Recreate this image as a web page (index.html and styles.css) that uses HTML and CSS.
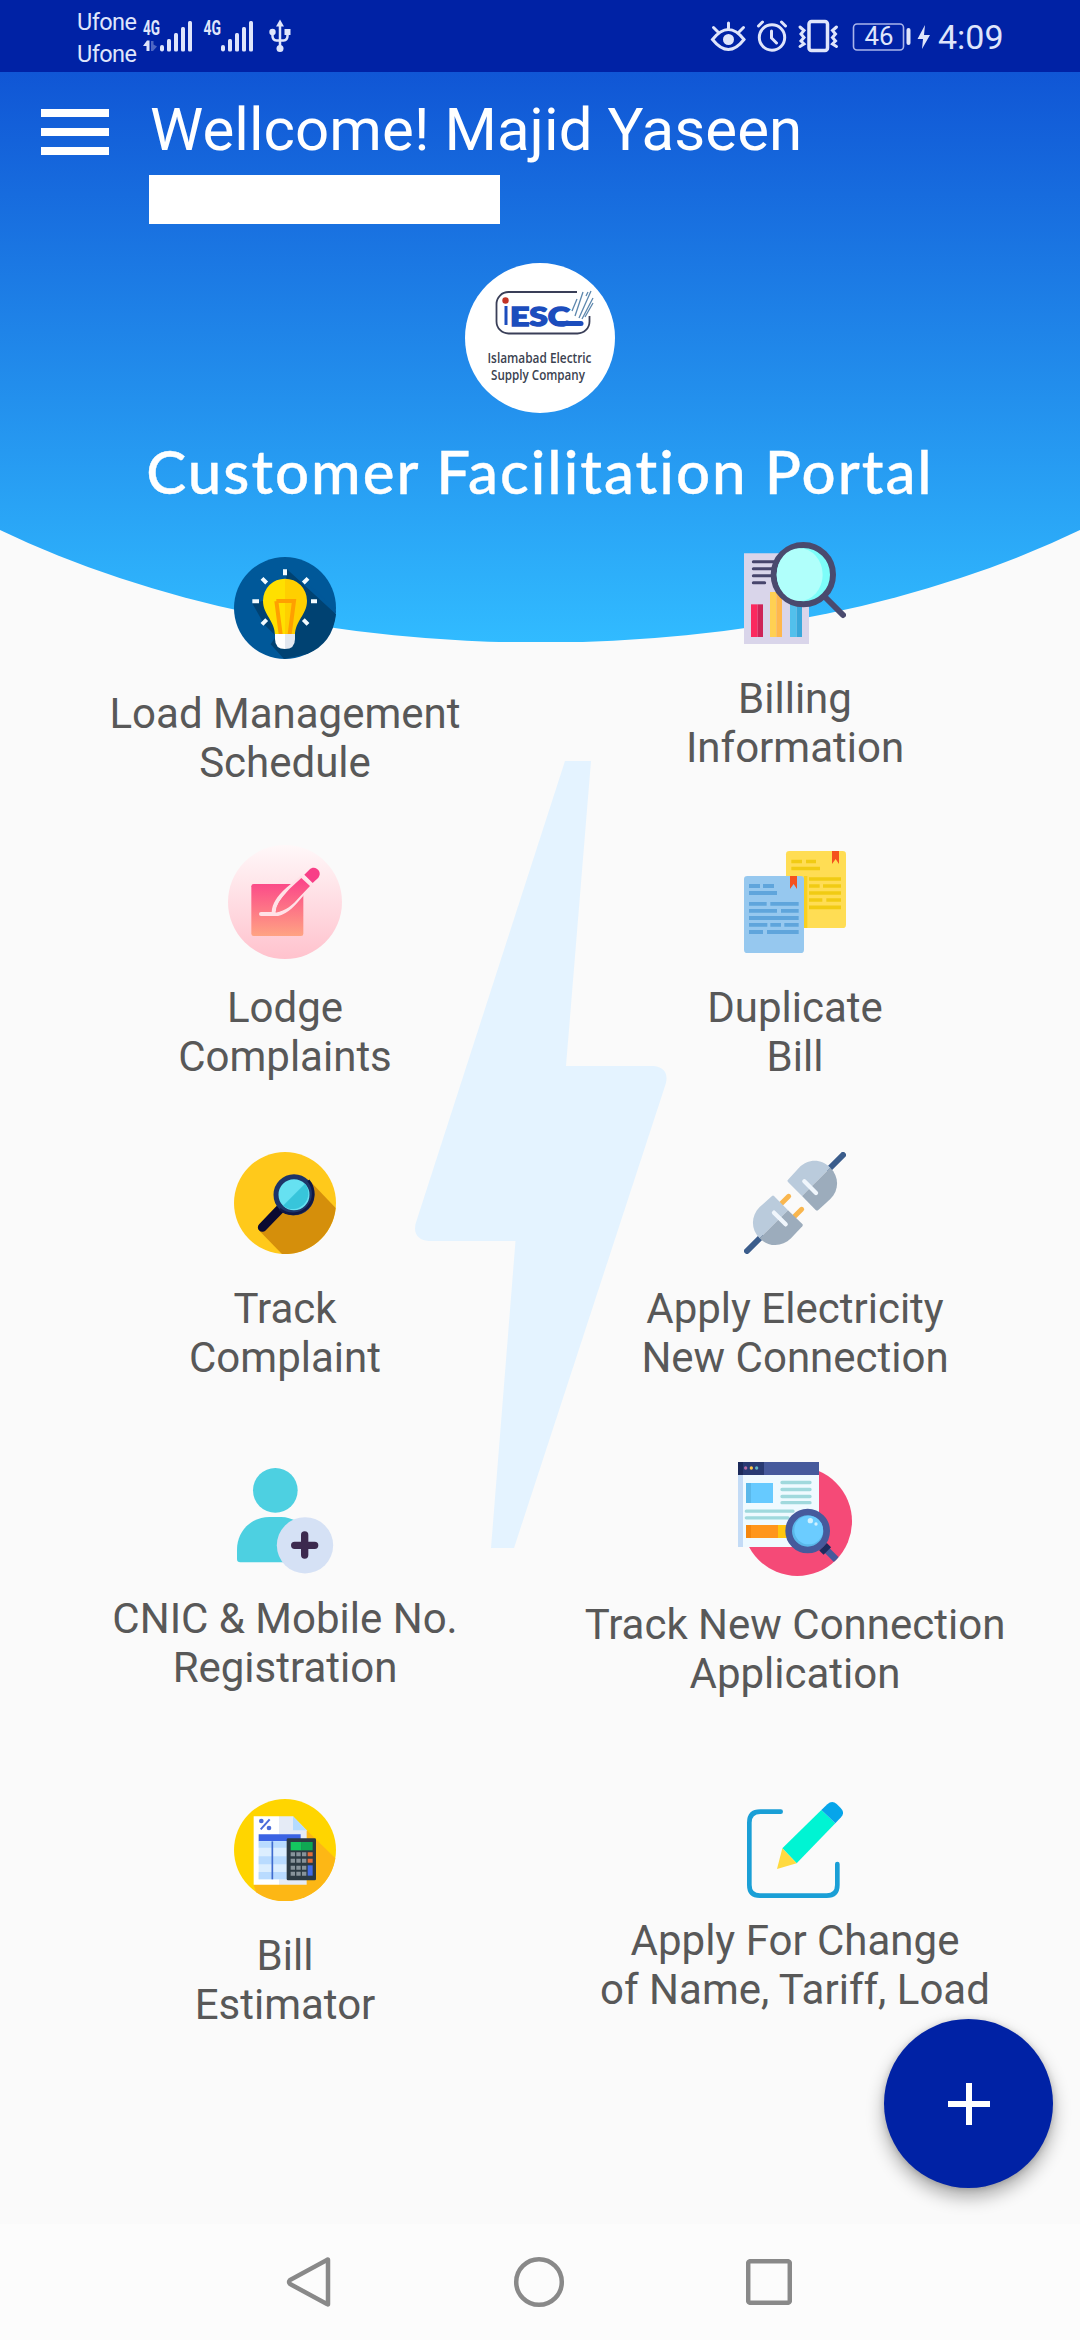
FILE: index.html
```html
<!DOCTYPE html>
<html lang="en">
<head>
<meta charset="utf-8">
<title>Customer Facilitation Portal</title>
<link rel="stylesheet" href="styles.css">
</head>
<body>
<div class="screen">
  <div class="status">
    <div class="carriers"><span>Ufone</span><span>Ufone</span></div>
    <svg class="status-icons" width="156" height="40" viewBox="140 16 156 40" fill="#dfe5fb">
      <text class="net" x="143" y="34.5" textLength="17" lengthAdjust="spacingAndGlyphs">4G</text>
      <text class="net" x="203.500" y="34.500" textLength="17.500" lengthAdjust="spacingAndGlyphs">4G</text>
      <path d="M143 46l4-5.500h2.500V51h-3v-5z"/>
      <path d="M151 41h2.500v3.500l3.500 2-4 4.500h-2z" opacity=".35"/>
      <g id="bars">
        <rect x="160" y="45" width="4" height="6.500" rx="2"/><rect x="167" y="39" width="4" height="12.500" rx="1.500"/><rect x="174" y="33" width="4" height="18.500" rx="1.500"/><rect x="181" y="27" width="4" height="24.500" rx="1.500"/><rect x="188" y="21" width="4" height="30.500" rx="1.500"/>
      </g>
      <use href="#bars" x="61"/>
      <path d="M280 19.500l4 7h-8z"/><circle cx="280" cy="48.500" r="3.500"/><circle cx="272.500" cy="32" r="3.200"/><rect x="284.500" y="29" width="6" height="6"/>
      <path d="M280 25v22M272.500 33v3q0 4 4 4.500h7q4-.500 4-4.500v-3" fill="none" stroke="#dfe5fb" stroke-width="2.500"/>
    </svg>
    <svg class="status-icons status-right" width="222" height="40" viewBox="710 16 222 40" fill="none" stroke="#dfe5fb" stroke-width="3" stroke-linecap="round">
      <path d="M712.500 39.500q16-20 31.500 0q-15.500 20-31.500 0zM728.500 28v-5M718 32l-4.500-4.500M739 32l4.500-4.500"/>
      <circle cx="728.500" cy="39.500" r="5.500" fill="#dfe5fb" stroke="none"/>
      <circle cx="772" cy="37.500" r="12.700"/><path d="M771.500 31v7l5 5M758.500 26l4-4M785.500 26l-4-4"/>
      <rect x="809" y="21.500" width="18.500" height="29" rx="2.500" stroke-width="3.500"/>
      <path d="M800 27l4 3.500-3 3.500 3 3.500-3 3.500 3 3-4 2.500M836.500 27l-4 3.500 3 3.500-3 3.500 3 3.500-3 3 4 2.500" stroke-width="3"/>
      <rect x="853.500" y="24" width="50" height="26" rx="3.500" stroke-width="1.600" stroke="#a9b5ea"/>
      <text class="batt" x="864.500" y="45" textLength="29" lengthAdjust="spacingAndGlyphs" stroke="none" fill="#dfe5fb">46</text>
      <path d="M908.500 30v13" stroke-width="4"/>
      <path d="M925 25l-7.500 14h5.500l-1 10 8-14h-6z" fill="#dfe5fb" stroke="none"/>
    </svg>
    <span class="clock">4:09</span>
  </div>

  <header class="hero">
    <div class="topline">
      <div class="burger"><i></i><i></i><i></i></div>
      <div class="who">
        <div class="welcome">Wellcome! Majid Yaseen</div>
        <div class="mask"></div>
      </div>
    </div>
    <svg class="logo" width="150" height="150" viewBox="0 0 150 150">
      <circle cx="75" cy="75" r="75" fill="#fff"/>
      <rect x="31.500" y="29" width="93" height="41.500" rx="12" fill="none" stroke="#3a3f58" stroke-width="1.800"/>
      <path d="M112 25h18v28h-18z" fill="#fff"/>
      <path d="M110 53l8-24M114 55l12-27M117 56l11-21M107 48l5-12M121 33l2-4M120 54l8-14" stroke="#5d87ad" stroke-width="1.300"/>
      <circle cx="40.500" cy="37.500" r="3.200" fill="#c33425"/>
      <rect x="39.500" y="43" width="3" height="19" fill="#1c4dbd"/>
      <text class="mark" x="45" y="62.500" textLength="60" lengthAdjust="spacingAndGlyphs">ESC</text>
      <path d="M92 60.500h24" stroke="#1c4dbd" stroke-width="5" stroke-linecap="round"/>
      <text class="name" x="22.500" y="100" textLength="104" lengthAdjust="spacingAndGlyphs">Islamabad Electric</text>
      <text class="name" x="26" y="117" textLength="94" lengthAdjust="spacingAndGlyphs">Supply Company</text>
    </svg>
    <h1 class="title">Customer Facilitation Portal</h1>
  </header>

  <main class="menu">
    <svg class="bolt" width="260" height="800" viewBox="410 755 260 800">
      <path d="M565 761h26l-25 305h88q15 2 12 17L514 1548h-23l24.500-307h-87q-16-2-13-17z" fill="#e4f3ff"/>
    </svg>

    <div class="column">
      <a class="tile t-load">
        <svg width="102" height="102" viewBox="0 0 306 306">
          <circle cx="153" cy="153" r="153" fill="#005899"/>
          <path d="M159 37L306 172Q296 260 220 291L150 306 110 262 128 235 55 139 95 130 153 110z" fill="#004272"/>
          <path d="M55 139L110 190 123 235 90 202Z" fill="#004272"/>
          <path d="M222 78L306 166" stroke="#005899" stroke-width="5"/>
          <path d="M153 65a66 66 0 0 0-66 66c0 42 36 60 36 104h30z" fill="#ffe000"/>
          <path d="M153 65a66 66 0 0 1 66 66c0 42-36 60-36 104h-30z" fill="#ffcf00"/>
          <path d="M127 132h53l-13 100M127 132l13 100" fill="none" stroke="#ff9f00" stroke-width="12"/>
          <path d="M123 231h30v45q-30 0-30-30z" fill="#fff"/><path d="M183 231h-30v45q30 0 30-30z" fill="#e3e8f0"/>
          <g stroke="#f2fbff" stroke-width="12"><path d="M153 37v18M55 133h20M231 133h18M84 64l14 14M222 64l-14 14M84 202l14-14M222 202l-14-14"/></g>
        </svg>
        <span class="label">Load Management<br>Schedule</span>
      </a>
      <a class="tile t-lodge">
        <svg width="114" height="114" viewBox="0 0 342 342">
          <defs>
            <linearGradient id="pale" x1="0" y1="0" x2="0" y2="1"><stop offset="0" stop-color="#fff8f9"/><stop offset="1" stop-color="#ffc2cd"/></linearGradient>
            <linearGradient id="coral" gradientUnits="userSpaceOnUse" x1="0" y1="110" x2="0" y2="273"><stop offset="0" stop-color="#fb4789"/><stop offset="1" stop-color="#ffa383"/></linearGradient>
          </defs>
          <circle cx="171" cy="171" r="171" fill="url(#pale)"/>
          <rect x="70" y="117" width="156" height="156" rx="7" fill="url(#coral)"/>
          <path d="M99 207h50c30-6 52-34 72-58l25-26-26-24-40 33c-25 22-43 46-43 70" fill="none" stroke="#ffe2e7" stroke-width="12" stroke-linecap="round"/>
          <path d="M220 99l26 24-32 34c-20 24-40 40-71 46 2-26 20-48 42-72z" fill="url(#coral)"/>
          <path d="M229 89l15-15c17-16 41 6 27 24l-17 16z" fill="#f83f87"/>
        </svg>
        <span class="label">Lodge<br>Complaints</span>
      </a>
      <a class="tile t-track">
        <svg width="102" height="102" viewBox="0 0 306 306">
          <circle cx="153" cy="153" r="153" fill="#ffc91b"/>
          <path d="M225 84L305 168A153 153 0 0 1 144 306L76 236z" fill="#d58f0b"/>
          <path d="M141 168L85 226" stroke="#0b0a31" stroke-width="27" stroke-linecap="round"/>
          <circle cx="180" cy="128" r="54" fill="#66e1f1" stroke="#1d3568" stroke-width="15"/>
          <path d="M213 95a47 47 0 0 1-66 66z" fill="#37c5db"/>
          <path d="M223 85a61 61 0 0 1-86 86" fill="none" stroke="#101846" stroke-width="8"/>
        </svg>
        <span class="label">Track<br>Complaint</span>
      </a>
      <a class="tile t-cnic">
        <svg width="102" height="106" viewBox="0 0 306 318">
          <circle cx="124" cy="67" r="67" fill="#4dd0e1"/>
          <path d="M9 273v-28c0-55 42-98 97-98h36q24 0 45 14l-20 122H19q-10 0-10-10z" fill="#4dd0e1"/>
          <circle cx="213" cy="232" r="84.500" fill="#d5e1f5"/>
          <path d="M182 232h60M212 201v60" stroke="#3c294e" stroke-width="22" stroke-linecap="round"/>
        </svg>
        <span class="label">CNIC &amp; Mobile No.<br>Registration</span>
      </a>
      <a class="tile t-bill">
        <svg width="102" height="102" viewBox="0 0 306 306">
          <circle cx="153" cy="153" r="153" fill="#ffd500"/>
          <path d="M218 94L304 178A153 153 0 0 1 66 280L59 257z" fill="#fdb715"/>
          <path d="M59 52h76v205H59z" fill="#fff"/><path d="M135 52h42l41 42v163h-83z" fill="#e5ebf6"/><path d="M177 52l41 42h-41z" fill="#b4dbff"/>
          <path d="M107 61L80 91" stroke="#4a6cd9" stroke-width="6"/><circle cx="82" cy="66" r="7" fill="#4a6cd9"/><circle cx="105" cy="87" r="7" fill="#4a6cd9"/>
          <path d="M74 106h126v21H74z" fill="#3b63e3"/>
          <path d="M74 127h84v114H74z" fill="#dceeff"/><path d="M74 127h84v19H74zM74 172h84v24H74zM74 219h84v22H74z" fill="#b9dbff"/>
          <path d="M115 127v114" stroke="#3f6bcf" stroke-width="5"/>
          <rect x="158" y="118" width="88" height="126" rx="4" fill="#2c3a43"/>
          <path d="M170 129h33v25h-33z" fill="#14c75f"/><path d="M203 129h33v25h-33z" fill="#10a853"/>
          <path d="M170 166h48M170 185h48M170 206h48M170 224h48" stroke="#87939b" stroke-width="12" stroke-dasharray="13 4"/>
          <path d="M221 166h15M221 185h15" stroke="#e06d3c" stroke-width="12"/><path d="M221 199h15v31h-15z" fill="#426ce8"/>
        </svg>
        <span class="label">Bill<br>Estimator</span>
      </a>
    </div>

    <div class="column">
      <a class="tile t-info">
        <svg width="102" height="102" viewBox="0 0 306 306">
          <path d="M0 34h195v272H0z" fill="#d9d5ea"/>
          <path d="M28 59.500h70M28 80.500h70M28 101.500h70M28 122h34" stroke="#47456c" stroke-width="9" stroke-linecap="round"/>
          <path d="M21 187h20v98H21z" fill="#fb295e"/><path d="M41 187h16v98H41z" fill="#ce2457"/>
          <path d="M78 150h19v135H78z" fill="#ffd052"/><path d="M97 150h17v135H97z" fill="#ffb74c"/>
          <path d="M138 180h20v105h-20z" fill="#52c0ec"/><path d="M158 180h16v105h-16z" fill="#38a7da"/>
          <path d="M243 165l54 54" stroke="#4a4a6e" stroke-width="18" stroke-linecap="round"/>
          <circle cx="178" cy="98" r="89" fill="#7dfdf9" stroke="#4a4a6e" stroke-width="18"/>
          <ellipse cx="167" cy="98" rx="69" ry="79" fill="#b0fffb"/>
        </svg>
        <span class="label">Billing<br>Information</span>
      </a>
      <a class="tile t-dup">
        <svg width="102" height="102" viewBox="0 0 306 306">
          <rect x="126" width="180" height="231" rx="10" fill="#ffdd54"/>
          <path d="M180 75h10v156h-10z" fill="#f9d01f"/>
          <path d="M142 31.500h32M186 31.500h30M142 52.500h86M195 84h96M195 105h32M237 105h54M195 126h96M195 147h40M247 147h44M195 169h96" stroke="#f1cb13" stroke-width="11"/>
          <path d="M264 0h21v39l-10-15-11 15z" fill="#f4511e"/>
          <rect y="75" width="180" height="231" rx="10" fill="#96c8ef"/>
          <path d="M15 105h33M57 105h33M15 126h84M15 158.500h53M79 158.500h85M15 179.500h84M111 179.500h53M15 201h149M15 221.500h55M79 221.500h32M121 221.500h43M15 243h42M69 243h95" stroke="#5fa5dc" stroke-width="11.500"/>
          <path d="M138 75h21v39l-10-15-11 15z" fill="#f4511e"/>
        </svg>
        <span class="label">Duplicate<br>Bill</span>
      </a>
      <a class="tile t-plug">
        <svg width="102" height="102" viewBox="0 0 306 306">
          <path d="M297 9l-42 42M9 297l42-42" stroke="#3b5d8c" stroke-width="18" stroke-linecap="round"/>
          <path d="M134 133l-24 24M173 172l-24 24" stroke="#f9b64e" stroke-width="15" stroke-linecap="round"/>
          <path d="M132 83l33-36c27-28 67-28 94 0l-85 85-42-42q-4-4 0-7z" fill="#bacbdc"/>
          <path d="M259 47c27 27 27 67 0 94l-36 33q-4 3-8 0l-41-42z" fill="#9cacbc"/>
          <path d="M84 132l-37 33c-27 27-27 67 0 94l85-84-42-43q-3-3-6 0z" fill="#bacbdc"/>
          <path d="M47 259c27 27 67 27 94 0l34-36q3-4 0-7l-43-41z" fill="#9cacbc"/>
          <path d="M181 88l35 35M90 182l35 35" stroke="#f0f6fc" stroke-width="13" stroke-linecap="round"/>
        </svg>
        <span class="label">Apply Electricity<br>New Connection</span>
      </a>
      <a class="tile t-app">
        <svg width="114" height="114" viewBox="0 0 342 342">
          <clipPath id="disc"><circle cx="178" cy="178" r="164"/></clipPath>
          <circle cx="178" cy="178" r="164" fill="#f54a77"/>
          <path d="M0 0h243v255H0z" fill="#effaff"/><path d="M0 39h15v216H0z" fill="#c3dbf6"/>
          <path d="M0 0h243v39H0z" fill="#465a9c"/><path d="M0 0h78v39H0z" fill="#283a72"/><path d="M0 0h15v39H0z" fill="#1c2a5b"/>
          <circle cx="23" cy="18" r="5" fill="#b46ba4"/><circle cx="40" cy="18" r="5" fill="#ffc347"/><circle cx="56" cy="18" r="5" fill="#5fb4c6"/>
          <path d="M24 63h81v60H24z" fill="#66caff"/><path d="M24 63h15v60H24z" fill="#5ab8ea"/>
          <path d="M132 61.500h84M132 82.500h84M132 103.500h84M132 122h84M25 147.500h140M25 167.500h125" stroke="#a0d9dd" stroke-width="10" stroke-linecap="round"/>
          <path d="M24 189h126v39H24z" fill="#ff961c"/><path d="M24 189h15v39H24z" fill="#f5870e"/><path d="M120 189h30v39h-30z" fill="#ffc60f"/>
          <path d="M258 256l48 48" stroke="#465a9c" stroke-width="20" clip-path="url(#disc)"/>
          <path d="M255 254l13 13" stroke="#1d2b5e" stroke-width="32"/>
          <circle cx="209" cy="207" r="57" fill="#5ab8ea" stroke="#465a9c" stroke-width="20"/>
          <circle cx="212" cy="204" r="43" fill="#6bccff"/>
          <circle cx="217" cy="176" r="8" fill="#d2f2ff"/><circle cx="234" cy="186" r="5" fill="#d2f2ff"/>
        </svg>
        <span class="label">Track New Connection<br>Application</span>
      </a>
      <a class="tile t-change">
        <svg width="96" height="96" viewBox="0 0 288 288">
          <path d="M101 29H40Q7 29 7 62v187q0 32 32 32h200q32 0 32-32v-63" fill="none" stroke="#1a9fd6" stroke-width="14" stroke-linecap="round"/>
          <path d="M223 24l42 40-116 120-43-45z" fill="#00f4d3"/>
          <path d="M106 139l43 45-59 17z" fill="#ffda3f"/>
          <path d="M223 24l18-17q14-13 28-1l12 12q14 14 1 28l-17 18z" fill="#06a5ea"/>
        </svg>
        <span class="label">Apply For Change<br>of Name, Tariff, Load</span>
      </a>
    </div>
    <div class="fab"><svg width="42" height="42" viewBox="0 0 42 42"><path d="M21 0v42M0 21h42" stroke="#fff" stroke-width="6"/></svg></div>
  </main>

  <nav class="nav">
    <svg width="46" height="52" viewBox="0 0 46 52"><path d="M42 4v44q0 1-1 0L4 28q-2-2 0-4L41 4q1-1 1 0z"/></svg>
    <svg width="52" height="52" viewBox="0 0 52 52"><circle cx="26" cy="26" r="22.800"/></svg>
    <svg width="46" height="46" viewBox="0 0 46 46"><rect x="2.200" y="2.200" width="41.600" height="41.600" rx="2"/></svg>
  </nav>
</div>
</body>
</html>
```
FILE: styles.css
```css
* { box-sizing: border-box; }
body { margin: 0; background: #fafafa; }
svg { display: block; flex: none; }
.screen {
  width: 1080px;
  height: 2340px;
  overflow: hidden;
  display: flex;
  flex-direction: column;
  font-family: Roboto, sans-serif;
}

.status {
  flex: none;
  height: 72px;
  background: #0022a5;
  color: #dfe5fb;
  display: flex;
  align-items: flex-start;
  padding: 0 78px 0 77px;
}
.carriers {
  display: flex;
  flex-direction: column;
  width: 63px;
  padding-top: 6px;
  font-size: 23.5px;
  line-height: 32px;
  letter-spacing: -.6px;
}
.status-icons { margin-top: 16px; }
.status-right { margin-left: auto; }
.net { font: 700 20.500px Roboto, sans-serif; }
.batt { font: 400 25.500px Roboto, sans-serif; }
.clock {
  margin-left: 6px;
  padding-top: 17px;
  width: 64px;
  font-size: 34px;
  line-height: 40px;
  white-space: nowrap;
}

.hero {
  flex: none;
  height: 570px;
  padding-top: 23px;
  background: linear-gradient(#1056d5, #31bbff);
  clip-path: path("M0 0H1080V458A833 472 0 0 1 0 458Z");
  color: #fff;
  display: flex;
  flex-direction: column;
  align-items: center;
}
.topline { display: flex; width: 100%; padding-left: 41px; gap: 40px; }
.burger { display: flex; flex-direction: column; gap: 11px; width: 68px; padding-top: 14px; }
.burger i { height: 8px; background: #fff; }
.welcome { font-size: 60px; line-height: 70px; padding-left: 1px; letter-spacing: .07px; white-space: nowrap; }
.mask { width: 351px; height: 49px; margin-top: 10px; background: #fff; }
.logo { margin-top: 39px; }
.mark { font: 900 27px Lato, sans-serif; fill: #1c4dbd; stroke: #1c4dbd; stroke-width: 1.5px; }
.name { font: 600 14px "Open Sans", sans-serif; fill: #3b4250; }
.title {
  margin: 22px 0 0;
  font: 500 60px/72px Lato, sans-serif;
  letter-spacing: 2px;
  -webkit-text-stroke: .4px #fff;
  white-space: nowrap;
}

.menu {
  position: relative;
  flex: none;
  height: 1683px;
  margin-top: -101px;
  padding: 0 30px;
  display: grid;
  grid-template-columns: 1fr 1fr;
}
.bolt { position: absolute; left: 410px; top: 214px; z-index: -1; }
.column { display: flex; flex-direction: column; }
.tile { display: flex; flex-direction: column; align-items: center; gap: 30px; }
.label {
  font-size: 42px;
  line-height: 49px;
  color: #585858;
  text-align: center;
  white-space: nowrap;
}
.t-load { margin-top: 16px; }
.t-lodge { margin-top: 58px; gap: 24px; }
.t-track { margin-top: 71px; }
.t-cnic { margin-top: 86px; gap: 20px; }
.t-bill { margin-top: 107px; }
.t-info { margin-top: 1px; }
.t-dup { margin-top: 79px; }
.t-plug { margin-top: 71px; }
.t-app { margin-top: 80px; gap: 24px; }
.t-change { margin-top: 104px; gap: 18px; }

.fab {
  position: absolute;
  left: 884px;
  top: 1478px;
  width: 169px;
  height: 169px;
  border-radius: 50%;
  background: #0022a5;
  box-shadow: 0 9px 18px rgba(0, 0, 0, .32), 0 1px 6px rgba(0, 0, 0, .16);
  display: flex;
  align-items: center;
  justify-content: center;
}

.nav {
  flex: 1;
  background: #fcfcfc;
  display: flex;
  align-items: center;
  justify-content: space-between;
  padding: 0 288px 0 286px;
}
.nav svg { fill: none; stroke: #898989; stroke-width: 4.500; }
```
